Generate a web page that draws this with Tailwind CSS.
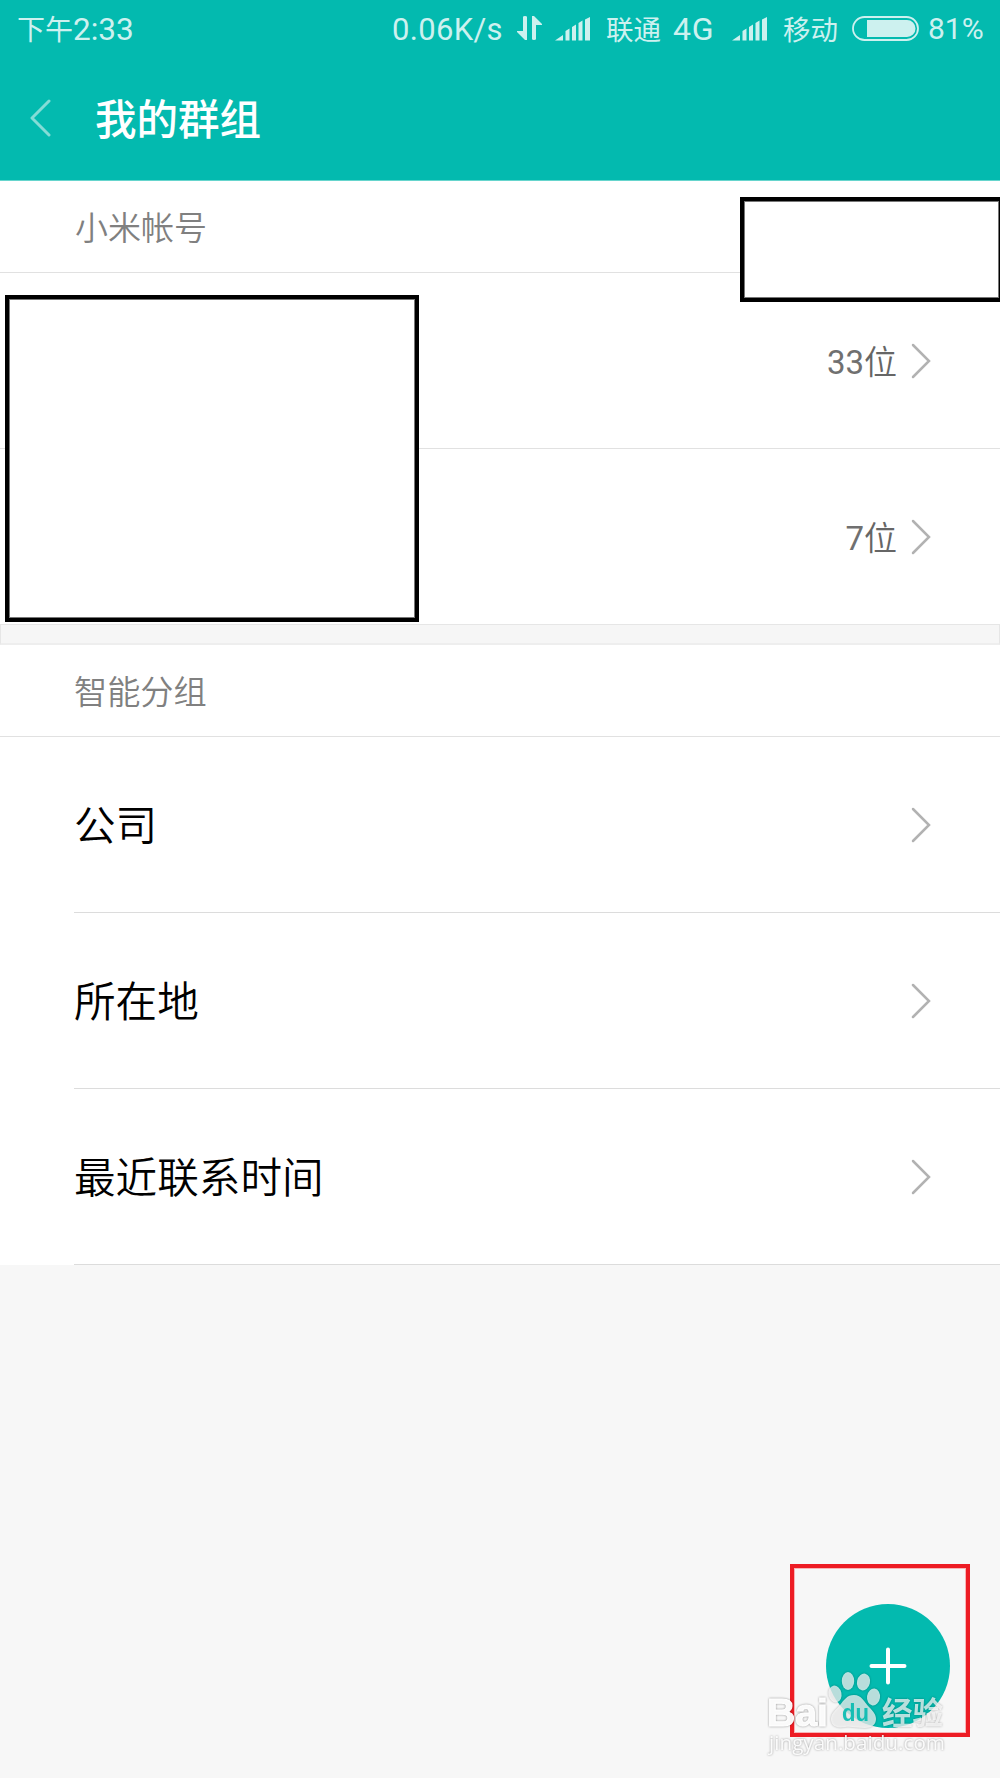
<!DOCTYPE html>
<html lang="zh-CN">
<head>
  <meta charset="UTF-8"/>
  <meta name="viewport" content="width=device-width, initial-scale=1.0"/>
  <title>我的群组</title>
  <script src="https://cdn.jsdelivr.net/npm/@tailwindcss/browser@4"></script>
</head>
<body class="bg-[#f7f7f7] font-[Roboto,'Noto_Sans_CJK_SC',sans-serif] relative w-[1000px] h-[1778px] overflow-hidden">

  <!-- Header -->
  <header class="h-[181px] bg-[#03baaf] border-b border-[#66d5cd] text-white">
    <!-- Status bar -->
    <div class="flex items-center h-[58px] pl-[17px] text-[30px] leading-none text-[#cdf1ef] whitespace-nowrap">
      <span class="w-[375px] pt-0.5 text-[28px]">下午<span class="text-[31.5px]">2:33</span></span>
      <span class="w-[125px] text-[31px] tracking-[0.3px]">0.06K/s</span>
      <svg class="w-[25px] h-6 shrink-0 mb-[2px]" viewBox="0 0 25 24" fill="currentColor">
        <path d="M6 1q0-1 2-1t2 1v23H8L0 16v-1h6zM15 0h2l8 8v1h-6v14q0 1-2 1t-2-1z"/>
      </svg>
      <svg class="ml-[13px] w-[35px] h-6 shrink-0 mb-[1px]" viewBox="0 0 35 24" fill="currentColor">
        <path d="M0 23.5L8 18v5.5zM10.5 14l4-2.5v12h-4zM17 10l4-2.5v16h-4zM23.5 6l4-2.5v20h-4zM30 2.500l5-2.5v23.500h-5z"/>
      </svg>
      <span class="ml-[16px] w-[67px] pt-[3px] text-[27.5px]">联通</span>
      <span class="w-[59px] text-[32px] tracking-[0.8px]">4G</span>
      <svg class="w-[35px] h-6 shrink-0 mb-[1px]" viewBox="0 0 35 24" fill="currentColor">
        <path d="M0 23.5L8 18v5.5zM10.5 14l4-2.5v12h-4zM17 10l4-2.5v16h-4zM23.5 6l4-2.5v20h-4zM30 2.500l5-2.5v23.500h-5z"/>
      </svg>
      <span class="ml-[16px] w-[69px] pt-[3px] text-[27.5px]">移动</span>
      <svg class="w-[67px] h-[25px] shrink-0 mb-[2px]" viewBox="0 0 67 25">
        <rect x="1" y="1" width="65" height="23" rx="11.5" fill="none" stroke="currentColor" stroke-width="1.8"/>
        <path d="M15 4h40a8.500 8.500 0 0 1 0 17H15z" fill="currentColor"/>
      </svg>
      <span class="ml-[9px] text-[30px]">81%</span>
    </div>
    <!-- Title bar -->
    <div class="flex items-center h-[122px] pl-[30px]">
      <svg class="w-[21px] h-[38px] mb-[3px]" viewBox="0 0 21 38" fill="none" stroke="#84dcd6" stroke-width="3" stroke-linecap="round" stroke-linejoin="round">
        <path d="M19 2L2 19l17 17"/>
      </svg>
      <h1 class="ml-[44px] pt-1 text-[41.5px] leading-none font-medium">我的群组</h1>
    </div>
  </header>

  <!-- Account groups -->
  <section class="bg-white">
    <h2 class="flex items-center h-[92px] pl-[75px] pt-[4px] border-b border-[#e1e1e1] text-[33px] font-[350] text-[#808080]">小米帐号</h2>
    <div class="flex items-center justify-end h-[176px] pr-[69px] border-b border-[#e1e1e1]">
      <span class="pt-[4px] text-[33px] text-[#707070]">33<span class="font-[350] text-[#666]">位</span></span>
      <svg class="ml-[14px] w-5 h-9" viewBox="0 0 20 36" fill="none" stroke="#b2b2b2" stroke-width="2.5" stroke-linecap="round"><path d="M2 2l16 16L2 34"/></svg>
    </div>
    <div class="flex items-center justify-end h-[175px] pr-[69px]">
      <span class="pt-[4px] text-[33px] text-[#707070]">7<span class="font-[350] text-[#666]">位</span></span>
      <svg class="ml-[14px] w-5 h-9" viewBox="0 0 20 36" fill="none" stroke="#b2b2b2" stroke-width="2.5" stroke-linecap="round"><path d="M2 2l16 16L2 34"/></svg>
    </div>
  </section>

  <div class="h-[21px] bg-[#f6f6f6] border border-[#e6e6e6] border-b-2 border-b-[#eee]"></div>

  <!-- Smart groups -->
  <section class="bg-white">
    <h2 class="flex items-center h-[92px] pl-[74px] pt-[4px] border-b border-[#e1e1e1] text-[33.2px] font-[350] text-[#808080]">智能分组</h2>
    <ul class="pl-[74px] text-[41.6px] font-[350] text-black">
      <li class="flex items-center justify-between h-[176px] pr-[69px] border-b border-[#dcdcdc]">
        <span class="pt-[5px]">公司</span>
        <svg class="w-5 h-9" viewBox="0 0 20 36" fill="none" stroke="#b2b2b2" stroke-width="2.5" stroke-linecap="round"><path d="M2 2l16 16L2 34"/></svg>
      </li>
      <li class="flex items-center justify-between h-[176px] pr-[69px] border-b border-[#dcdcdc]">
        <span class="pt-[5px]">所在地</span>
        <svg class="w-5 h-9" viewBox="0 0 20 36" fill="none" stroke="#b2b2b2" stroke-width="2.5" stroke-linecap="round"><path d="M2 2l16 16L2 34"/></svg>
      </li>
      <li class="flex items-center justify-between h-[176px] pr-[69px] border-b border-[#dcdcdc]">
        <span class="pt-[5px]">最近联系时间</span>
        <svg class="w-5 h-9" viewBox="0 0 20 36" fill="none" stroke="#b2b2b2" stroke-width="2.5" stroke-linecap="round"><path d="M2 2l16 16L2 34"/></svg>
      </li>
    </ul>
  </section>

  <!-- Masked areas -->
  <div class="absolute left-[740px] top-[197px] w-[260px] h-[105px] bg-white border-4 border-r border-black shadow-[inset_0_0_0_1px_#777]"></div>
  <div class="absolute left-[5px] top-[295px] w-[414px] h-[327px] bg-white border-4 border-black shadow-[inset_0_0_0_1px_#777]"></div>

  <!-- Add button -->
  <button class="absolute left-[826px] top-[1604px] w-[124px] h-[124px] rounded-full bg-[#03baaf] flex items-center justify-center">
    <svg class="w-[38px] h-[38px]" viewBox="0 0 38 38" stroke="#fff" stroke-width="4" stroke-linecap="round"><path d="M19 2.5v33M2.5 19h33"/></svg>
  </button>
  <div class="absolute left-[790px] top-[1564px] w-[180px] h-[173px] border-4 border-[#ed1c24] shadow-[inset_0_0_0_1px_#f9b4b6]"></div>

  <!-- Watermark -->
  <svg class="absolute left-[760px] top-[1660px] w-[200px] h-[100px] drop-shadow-[0_0_1px_rgba(0,0,0,0.4)]" viewBox="0 0 200 100" fill="#fff" fill-opacity="0.72">
    <text x="7" y="66" font-family="Liberation Sans" font-weight="700" font-size="39" fill-opacity="0.95" stroke="#fff" stroke-width="1" textLength="61" lengthAdjust="spacingAndGlyphs">Bai</text>
    <ellipse cx="75" cy="34" rx="6.5" ry="8.5" transform="rotate(-12 75 34)"/>
    <ellipse cx="88" cy="21" rx="6.2" ry="9"/>
    <ellipse cx="103.5" cy="22" rx="6.5" ry="8.5" transform="rotate(12 103.5 22)"/>
    <ellipse cx="113.5" cy="37" rx="6.5" ry="8.5" transform="rotate(8 113.5 37)"/>
    <path d="M94 35c8 0 10 7 15 12s7 8 7 12c0 6-5 9-11 9-7 0-14-2-20-1-12 2-14-4-14-8 0-6 5-9 9-14s7-10 14-10z"/>
    <text x="82" y="61" font-family="Liberation Sans" font-weight="700" font-size="23" fill="#03baaf" fill-opacity="0.9" textLength="27" lengthAdjust="spacingAndGlyphs">du</text>
    <text x="122" y="64" font-family="Noto Sans CJK SC" font-weight="700" font-size="30.5">经验</text>
    <text x="9" y="90" font-family="Open Sans" font-size="20" fill-opacity="0.9" textLength="176" lengthAdjust="spacingAndGlyphs">jingyan.baidu.com</text>
  </svg>

</body>
</html>
